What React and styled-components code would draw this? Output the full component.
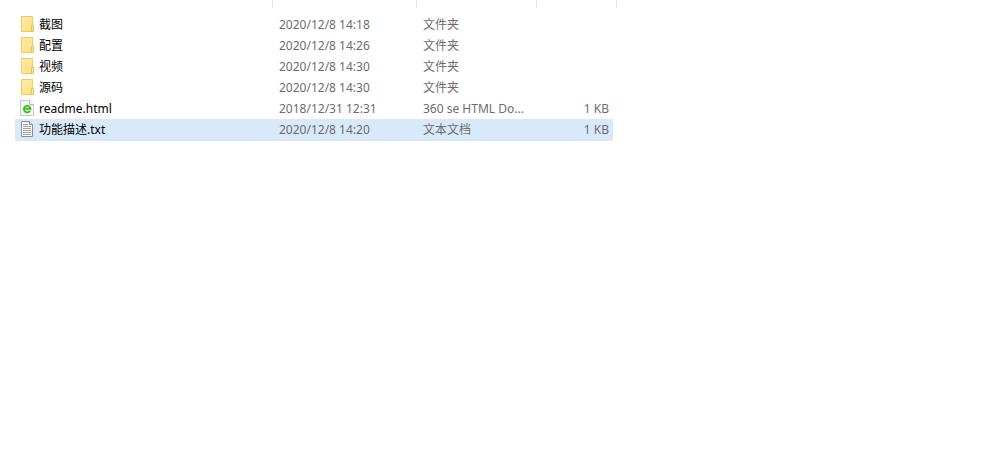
import React from 'react'
import styled, { createGlobalStyle } from 'styled-components'

const GlobalStyle = createGlobalStyle`
body{
margin:0;
background:#ffffff;
font-family:"Noto Sans","Noto Sans CJK SC",sans-serif;
font-size:12px;
}
`
const Explorer = styled.main`
padding-left:15px;
`
const Header = styled.div`
display:grid;
grid-template-columns:258px 144px 120px 80px;
height:8px;
margin-bottom:6px;
`
const Divider = styled.div`
border-right:1px solid #e5e5e5;
`
const FileTable = styled.table`
table-layout:fixed;
width:598px;
max-width:100%;
border-collapse:collapse;
line-height:20px;
`
const Col = styled.col`
width:${props => props.$width};
`
const Row = styled.tr`
height:${props => (props.$selected ? '22px' : '21px')};
background:${props => (props.$selected ? '#d8e9f9' : 'transparent')};
`
const Cell = styled.td`
padding:1px 4px 0 6px;
color:#6d6d6d;
text-align:${props => props.$align || 'left'};
vertical-align:top;
white-space:nowrap;
`
const NameCell = styled(Cell)`
padding-left:4px;
color:#000000;
`
const FileName = styled.div`
display:flex;
align-items:center;
gap:4px;
`
const Icon = styled.svg`
display:block;
width:16px;
height:20px;
flex:none;
`

const FolderIcon = () => (
    <Icon viewBox="0 1 16 20" aria-hidden="true">
        <defs>
            <linearGradient id="folder" x1="0" y1="0" x2="1" y2="1">
                <stop offset="0" stopColor="#ffebab" />
                <stop offset="1" stopColor="#fde084" />
            </linearGradient>
        </defs>
        <path d="M2.5 2.5h11v15h-11z" fill="url(#folder)" stroke="#edcb5c" />
        <path d="M12.5 17.5v-6h2v6z" fill="#ffe999" stroke="#e8c24f" />
    </Icon>
)

const HtmlIcon = () => (
    <Icon viewBox="0 1 16 20" aria-hidden="true">
        <path d="M1.5 2.5h9l4 4v11h-13z" fill="#f7f7f7" stroke="#c8c8c8" />
        <path d="M10.5 2.5v4h4" fill="#ffffff" stroke="#b4b4b4" />
        <path d="M11.1 12.7A3.3 3.3 0 1 1 11.5 10.8H5.5" fill="none" stroke="#3cc420" strokeWidth="2" />
    </Icon>
)

const TextIcon = () => (
    <Icon viewBox="0 1 16 20" aria-hidden="true">
        <path d="M2.5 2.5h8l3 3v12h-11z" fill="#fcfcfc" stroke="#8c8c8c" />
        <path d="M10.5 2.5v3h3" fill="#e4e4e4" stroke="#8c8c8c" />
        <path d="M4 5.5h5M4 7.5h8M4 9.5h8M4 11.5h8M4 13.5h8M4 15.5h8" stroke="#a2a2a2" />
    </Icon>
)

const icons = { folder: FolderIcon, html: HtmlIcon, text: TextIcon }

const files = [
    { name: '截图', date: '2020/12/8 14:18', type: '文件夹', icon: 'folder' },
    { name: '配置', date: '2020/12/8 14:26', type: '文件夹', icon: 'folder' },
    { name: '视频', date: '2020/12/8 14:30', type: '文件夹', icon: 'folder' },
    { name: '源码', date: '2020/12/8 14:30', type: '文件夹', icon: 'folder' },
    { name: 'readme.html', date: '2018/12/31 12:31', type: '360 se HTML Do...', size: '1 KB', icon: 'html' },
    { name: '功能描述.txt', date: '2020/12/8 14:20', type: '文本文档', size: '1 KB', icon: 'text', selected: true },
]

const FileRow = ({ file }) => {
    const FileIcon = icons[file.icon]
    return (
        <Row $selected={file.selected}>
            <NameCell>
                <FileName>
                    <FileIcon />
                    <span>{file.name}</span>
                </FileName>
            </NameCell>
            <Cell>{file.date}</Cell>
            <Cell>{file.type}</Cell>
            <Cell $align="right">{file.size}</Cell>
        </Row>
    )
}

const App = () => (
    <Explorer>
        <GlobalStyle />
        <Header>
            <Divider />
            <Divider />
            <Divider />
            <Divider />
        </Header>
        <FileTable>
            <colgroup>
                <Col $width="258px" />
                <Col $width="144px" />
                <Col $width="120px" />
                <Col $width="auto" />
            </colgroup>
            <tbody>
                {files.map(file => <FileRow key={file.name} file={file} />)}
            </tbody>
        </FileTable>
    </Explorer>
)

export default App
